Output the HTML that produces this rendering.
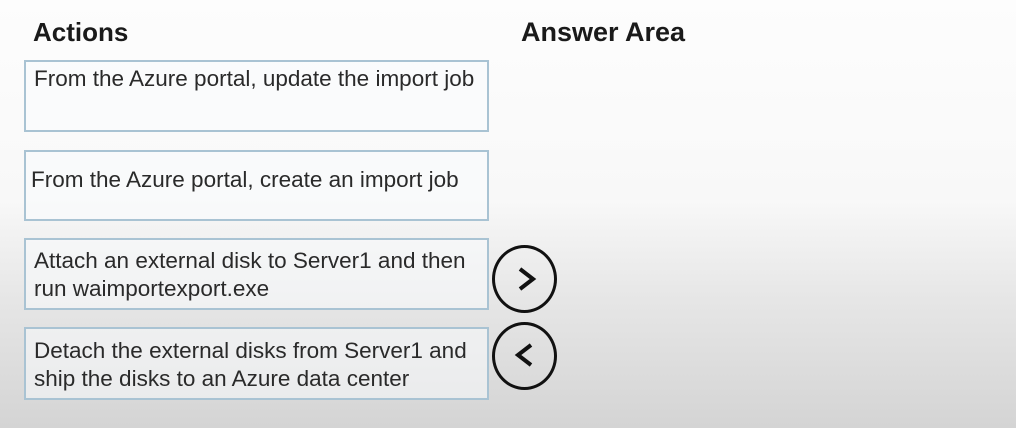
<!DOCTYPE html>
<html><head><style>
body{margin:0;width:1016px;height:428px;overflow:hidden;font-family:"Liberation Sans",sans-serif;color:#2a2a2a;
background:linear-gradient(to bottom,#fdfdfd 0px,#f8f8f8 200px,#e6e6e6 300px,#d4d4d4 428px);position:relative}
.h{position:absolute;font-weight:bold;font-size:26px;top:17px;color:#1a1a1a}
.b{position:absolute;left:24px;width:465px;border:2px solid #a9c3d3;background:rgba(250,252,253,0.55);box-sizing:border-box;font-size:22.5px;line-height:28px;padding:3px 8px;letter-spacing:0px;white-space:nowrap}
.c{position:absolute;left:492px;width:65px;height:68px;border:3.5px solid #111;border-radius:50%;box-sizing:border-box}
.c svg{position:absolute;left:14px;top:14px}
</style></head><body>
<div class="h" style="left:33px">Actions</div>
<div class="h" style="left:521px;font-size:27px">Answer Area</div>
<div class="b" style="top:60px;height:72px">From the Azure portal, update the import job</div>
<div class="b" style="top:150px;height:71px;padding-top:14px;padding-left:5px">From the Azure portal, create an import job</div>
<div class="b" style="top:238px;height:72px;padding-top:7px">Attach an external disk to Server1 and then<br>run waimportexport.exe</div>
<div class="b" style="top:327px;height:73px;padding-top:8px">Detach the external disks from Server1 and<br>ship the disks to an Azure data center</div>
<div class="c" style="top:245px"><svg width="34" height="34"><path d="M11 7 L24 17 L11 27" fill="none" stroke="#111" stroke-width="4"/></svg></div>
<div class="c" style="top:322px"><svg width="34" height="34"><path d="M22 6 L9 16 L22 26" fill="none" stroke="#111" stroke-width="4"/></svg></div>
</body></html>
